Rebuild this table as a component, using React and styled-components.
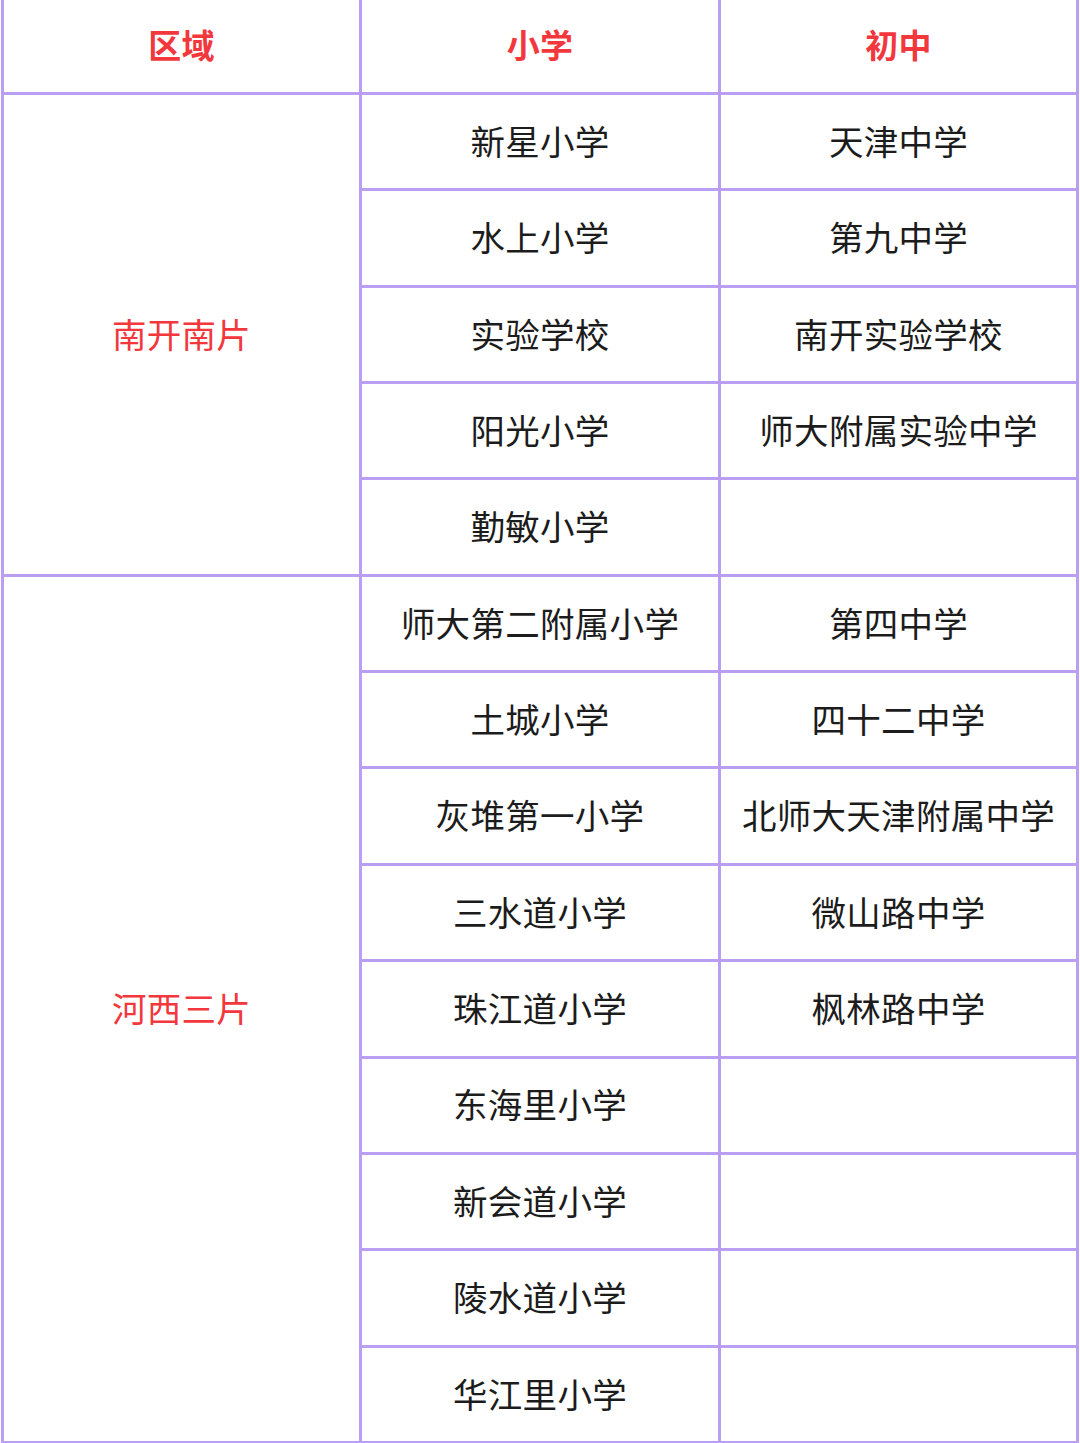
import React from 'react';
import styled, { createGlobalStyle } from 'styled-components';

const GlobalStyle = createGlobalStyle`
  html, body { margin: 0; padding: 0; background: #fff; }
  body { font-family: "Noto Sans CJK SC", "Noto Sans", sans-serif; }
`;

const regions = [
  {
    name: '南开南片',
    rows: [
      ['新星小学', '天津中学'],
      ['水上小学', '第九中学'],
      ['实验学校', '南开实验学校'],
      ['阳光小学', '师大附属实验中学'],
      ['勤敏小学', ''],
    ],
  },
  {
    name: '河西三片',
    rows: [
      ['师大第二附属小学', '第四中学'],
      ['土城小学', '四十二中学'],
      ['灰堆第一小学', '北师大天津附属中学'],
      ['三水道小学', '微山路中学'],
      ['珠江道小学', '枫林路中学'],
      ['东海里小学', ''],
      ['新会道小学', ''],
      ['陵水道小学', ''],
      ['华江里小学', ''],
    ],
  },
];

export default function App() {
  let row = 2;
  return (
    <>
      <GlobalStyle />
      <Table>
        <HeadCell>区域</HeadCell>
        <HeadCell>小学</HeadCell>
        <HeadCell>初中</HeadCell>
        {regions.map((r) => {
          const start = row;
          row += r.rows.length;
          return (
            <React.Fragment key={r.name}>
              <RegionCell $start={start} $span={r.rows.length}>{r.name}</RegionCell>
              {r.rows.map(([primary, middle], i) => (
                <React.Fragment key={primary}>
                  <Cell $row={start + i} $col={2}>{primary}</Cell>
                  <Cell $row={start + i} $col={3}>{middle}</Cell>
                </React.Fragment>
              ))}
            </React.Fragment>
          );
        })}
      </Table>
    </>
  );
}

const Table = styled.div`
  box-sizing: border-box;
  width: 1078px;
  height: 1443px;
  margin-left: 1px;
  display: grid;
  grid-template-columns: 355px 356px 355px;
  grid-template-rows: 92px repeat(14, 1fr);
  gap: 3px;
  padding: 0 3px 2px 3px;
  background: #b99ef4;
`;

const BaseCell = styled.div`
  background: #fff;
  display: flex;
  align-items: center;
  justify-content: center;
  font-size: 34.5px;
  letter-spacing: 0.3px;
  line-height: 1;
  white-space: nowrap;
  padding-bottom: 3px;
`;

const HeadCell = styled(BaseCell)`
  color: #f2383d;
  font-weight: 700;
  font-size: 33px;
`;

const RegionCell = styled(BaseCell)`
  color: #f2383d;
  grid-column: 1;
  grid-row: ${(p) => p.$start} / span ${(p) => p.$span};
`;

const Cell = styled(BaseCell)`
  color: #1c1c1c;
  grid-column: ${(p) => p.$col};
  grid-row: ${(p) => p.$row};
`;
